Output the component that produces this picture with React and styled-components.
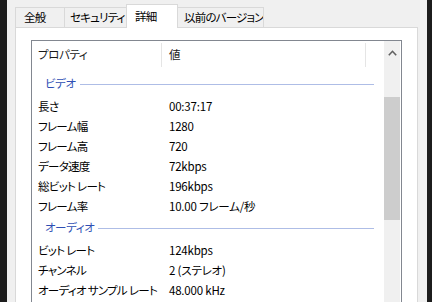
import React from 'react';
import styled, { createGlobalStyle } from 'styled-components';

const GlobalStyle = createGlobalStyle`
  html, body {
    margin: 0;
    padding: 0;
    background: #f0f0f0;
  }
  body {
    font-family: 'Noto Sans CJK JP', 'Noto Sans', sans-serif;
    font-size: 11.5px;
    font-feature-settings: 'palt' 1;
    color: #000;
  }
`;

const Frame = styled.div`
  display: flex;
  width: 432px;
  height: 302px;
  overflow: hidden;
`;

const DarkEdge = styled.div`
  width: ${(p) => p.$w}px;
  flex: none;
  background: #1c1c1c;
`;

const Dialog = styled.div`
  flex: 1;
  display: flex;
  flex-direction: column;
  background: #f0f0f0;
  padding: 4px 9px 0 8px;
  min-width: 0;
`;

const TabRow = styled.div`
  display: flex;
  align-items: flex-end;
  height: 24px;
  position: relative;
  z-index: 1;
  margin-bottom: -1px;
`;

const Tab = styled.div`
  box-sizing: border-box;
  width: ${(p) => p.$w}px;
  height: ${(p) => (p.$active ? 24 : 21)}px;
  padding-left: ${(p) => p.$pad}px;
  margin-left: -1px;
  border: 1px solid #d9d9d9;
  border-bottom: ${(p) => (p.$active ? 'none' : '1px solid #d9d9d9')};
  background: ${(p) => (p.$active ? '#fff' : '#f0f0f0')};
  display: flex;
  align-items: center;
  padding-top: ${(p) => (p.$active ? 0 : 1)}px;
  white-space: nowrap;
  overflow: hidden;
  line-height: 1;
  letter-spacing: -0.8px;
  &:first-child {
    margin-left: 0;
  }
`;

const Panel = styled.div`
  flex: 1;
  background: #fff;
  border: 1px solid #d9d9d9;
  border-bottom: none;
  padding: 12px 15px 0 15px;
  display: flex;
  flex-direction: column;
  min-height: 0;
`;

const ListBox = styled.div`
  flex: 1;
  border: 1px solid #828790;
  border-bottom: none;
  display: flex;
  padding-right: 1px;
  min-height: 0;
`;

const ListBody = styled.div`
  flex: 1;
  display: flex;
  flex-direction: column;
  min-width: 0;
`;

const HeaderRow = styled.div`
  display: flex;
  height: 26px;
  flex: none;
`;

const HeaderCell = styled.div`
  box-sizing: border-box;
  width: ${(p) => p.$w}px;
  flex: ${(p) => (p.$w ? 'none' : 1)};
  padding-left: ${(p) => p.$pl}px;
  display: flex;
  align-items: center;
  color: #1a1a1a;
  letter-spacing: -0.4px;
  position: relative;
  &::after {
    content: '';
    display: ${(p) => (p.$divider ? 'block' : 'none')};
    position: absolute;
    right: 0;
    top: 2px;
    bottom: 0;
    width: 1px;
    background: #e5e5e5;
  }
`;

const GroupRow = styled.div`
  height: 24px;
  display: flex;
  align-items: center;
  gap: 4px;
  padding-left: 13px;
  padding-right: 10px;
  margin-top: ${(p) => p.$mt || 0}px;
  flex: none;
`;

const GroupLabel = styled.span`
  color: #2f4fb4;
  line-height: 1;
  letter-spacing: -0.4px;
`;

const GroupLine = styled.div`
  flex: 1;
  height: 1px;
  background: #aebde6;
`;

const Row = styled.div`
  display: flex;
  height: 20px;
  align-items: center;
  flex: none;
  white-space: nowrap;
`;

const NameCell = styled.div`
  box-sizing: border-box;
  width: 130px;
  padding-left: 6px;
  flex: none;
  letter-spacing: -0.7px;
`;

const ValueCell = styled.div`
  padding-left: 7px;
  flex: 1;
  letter-spacing: -0.2px;
`;

const ScrollBar = styled.div`
  width: 16px;
  flex: none;
  background: #f0f0f0;
  display: flex;
  flex-direction: column;
`;

const ArrowButton = styled.div`
  height: 17px;
  display: flex;
  align-items: flex-end;
  justify-content: center;
  padding-bottom: 2px;
  box-sizing: border-box;
`;

const Thumb = styled.div`
  margin-top: 39px;
  height: 123px;
  background: #cdcdcd;
`;

const groups = [
  {
    title: 'ビデオ',
    rows: [
      ['長さ', '00:37:17'],
      ['フレーム幅', '1280'],
      ['フレーム高', '720'],
      ['データ速度', '72kbps'],
      ['総ビット レート', '196kbps'],
      ['フレーム率', '10.00 フレーム/秒'],
    ],
  },
  {
    title: 'オーディオ',
    rows: [
      ['ビット レート', '124kbps'],
      ['チャンネル', '2 (ステレオ)'],
      ['オーディオ サンプル レート', '48.000 kHz'],
    ],
  },
];

const tabs = [
  { label: '全般', w: 50, pad: 8 },
  { label: 'セキュリティ', w: 63, pad: 5 },
  { label: '詳細', w: 52, pad: 8, active: true },
  { label: '以前のバージョン', w: 87, pad: 6 },
];

export default function App() {
  return (
    <Frame>
      <GlobalStyle />
      <DarkEdge $w={7} />
      <Dialog>
        <TabRow>
          {tabs.map((t) => (
            <Tab key={t.label} $active={t.active} $w={t.w} $pad={t.pad}>
              {t.label}
            </Tab>
          ))}
        </TabRow>
        <Panel>
          <ListBox>
            <ListBody>
              <HeaderRow>
                <HeaderCell $w={130} $pl={6} $divider>
                  プロパティ
                </HeaderCell>
                <HeaderCell $w={204} $pl={7} $divider>
                  値
                </HeaderCell>
                <HeaderCell />
              </HeaderRow>
              {groups.map((g, i) => (
                <React.Fragment key={g.title}>
                  <GroupRow $mt={i === 0 ? 5 : 0}>
                    <GroupLabel>{g.title}</GroupLabel>
                    <GroupLine />
                  </GroupRow>
                  {g.rows.map(([k, v]) => (
                    <Row key={k}>
                      <NameCell>{k}</NameCell>
                      <ValueCell>{v}</ValueCell>
                    </Row>
                  ))}
                </React.Fragment>
              ))}
            </ListBody>
            <ScrollBar>
              <ArrowButton>
                <svg width="9" height="6" viewBox="0 0 9 6">
                  <path d="M0.8 5.2 L4.5 1.3 L8.2 5.2" fill="none" stroke="#606060" strokeWidth="1.6" />
                </svg>
              </ArrowButton>
              <Thumb />
            </ScrollBar>
          </ListBox>
        </Panel>
      </Dialog>
      <DarkEdge $w={5} />
    </Frame>
  );
}
